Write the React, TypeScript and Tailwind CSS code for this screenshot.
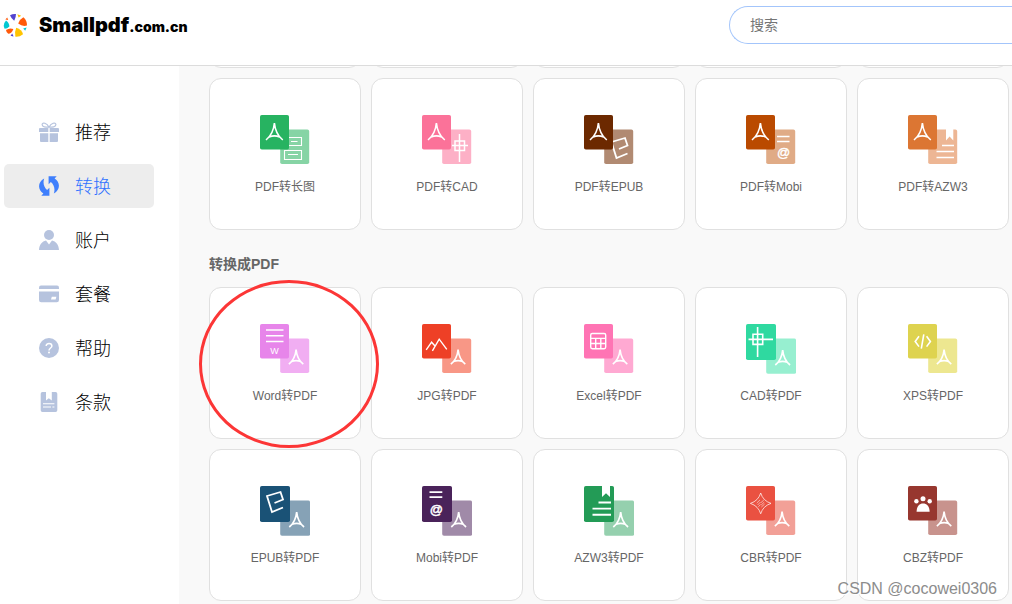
import type { ReactNode } from "react";

type Tool = {
  label: string;
  front: string;
  back: string;
  large?: boolean;
  circled?: boolean;
  frontGlyph: ReactNode;
  backGlyph: ReactNode;
};

type NavItem = { label: string; icon: ReactNode; active?: boolean };

const pdfPath =
  "M14.4 8C13.9 13.5 11.2 20.8 6 25M14.4 8C14.9 13.5 17.6 20.8 22.8 25M9.2 21.9Q14.4 19.8 19.6 21.9";

const pdfFront = <path d={pdfPath} strokeWidth="1.6" />;
const pdfBack = (
  <g transform="translate(23.7 18.7) scale(.86)">
    <path d={pdfPath} strokeWidth="1.9" />
  </g>
);
const pdfBackLarge = (
  <g transform="translate(24 19) scale(.88)">
    <path d={pdfPath} strokeWidth="1.9" />
  </g>
);

const epubGlyph = <path d="M14.5 17L23 13.5L20.5 6L7 10L12 26L23 21.5" strokeWidth="1.8" />;

const fromPdf: Tool[] = [
  {
    label: "PDF转长图",
    front: "#27b361",
    back: "#86d4a5",
    frontGlyph: pdfFront,
    backGlyph: (
      <path
        d="M24.5 22.5H41.5V30.5H24.5ZM31 26.5H37.5M24.5 35.5H41.5V44.5H24.5ZM28 39.5H38"
        strokeWidth="1.1"
      />
    ),
  },
  {
    label: "PDF转CAD",
    front: "#fb7299",
    back: "#fdb0c6",
    frontGlyph: pdfFront,
    backGlyph: <path d="M37.5 19V47M30 30.5H46M33 26H42.5V35.5H33Z" strokeWidth="1.5" />,
  },
  {
    label: "PDF转EPUB",
    front: "#6c2900",
    back: "#b18a72",
    frontGlyph: pdfFront,
    backGlyph: <g transform="translate(20.5 17)">{epubGlyph}</g>,
  },
  {
    label: "PDF转Mobi",
    front: "#ba4a00",
    back: "#e0ab86",
    frontGlyph: pdfFront,
    backGlyph: (
      <>
        <path d="M31 21.5H43.5M31 26.5H43.5" strokeWidth="1.5" />
        <text x="37.7" y="42" fontSize="13" textAnchor="middle" fill="#fff" strokeWidth=".4">
          @
        </text>
      </>
    ),
  },
  {
    label: "PDF转AZW3",
    front: "#dc7633",
    back: "#edb694",
    frontGlyph: pdfFront,
    backGlyph: (
      <>
        <path d="M38 14H45.3V25.5L41.6 21.5L38 25.5Z" fill="#fff" stroke="none" />
        <path d="M34 30.5H46M28.5 36.5H46M28.5 42.5H46" strokeWidth="1.6" />
      </>
    ),
  },
];

const toPdf: Tool[] = [
  {
    label: "Word转PDF",
    front: "#e785ea",
    back: "#f1aef2",
    circled: true,
    frontGlyph: (
      <>
        <path d="M6 6H23.5M6 11.7H23.5M6 17.4H23.5" strokeWidth="1.5" />
        <text x="14.4" y="29.6" fontSize="9" textAnchor="middle" fill="#fff" stroke="none">
          W
        </text>
      </>
    ),
    backGlyph: pdfBack,
  },
  {
    label: "JPG转PDF",
    front: "#ee4026",
    back: "#f89786",
    frontGlyph: (
      <path d="M4.2 25.8L9.6 18.2L12.8 21.8M10.4 26.8L17.2 15.2L24.8 25.3" strokeWidth="1.4" />
    ),
    backGlyph: pdfBack,
  },
  {
    label: "Excel转PDF",
    front: "#ff74b4",
    back: "#ffa9d2",
    frontGlyph: (
      <>
        <rect x="6.7" y="9.5" width="15" height="15.2" rx="1.6" strokeWidth="1.4" />
        <path d="M6.7 14.4H21.7M6.7 19.5H21.7M11.7 14.4V24.7M16.8 14.4V24.7" strokeWidth="1.4" />
      </>
    ),
    backGlyph: pdfBack,
  },
  {
    label: "CAD转PDF",
    front: "#2fd9a0",
    back: "#97efd0",
    large: true,
    frontGlyph: <path d="M11.6 3V33M2.5 15.4H27M7 10.2H16.7V20.4H7Z" strokeWidth="1.6" />,
    backGlyph: pdfBackLarge,
  },
  {
    label: "XPS转PDF",
    front: "#ded34f",
    back: "#ede790",
    frontGlyph: (
      <path
        d="M11 12.3L7.2 17.4L11 22.6M18.6 12.3L22.4 17.4L18.6 22.6M15.8 10.3L13.3 24.6"
        strokeWidth="1.6"
      />
    ),
    backGlyph: pdfBack,
  },
  {
    label: "EPUB转PDF",
    front: "#1a5276",
    back: "#86a2b6",
    large: true,
    frontGlyph: epubGlyph,
    backGlyph: pdfBackLarge,
  },
  {
    label: "Mobi转PDF",
    front: "#4a235a",
    back: "#a08aa8",
    large: true,
    frontGlyph: (
      <>
        <path d="M7.5 6.2H20.3M7.5 11.2H20.3" strokeWidth="1.7" />
        <text x="14.3" y="28" fontSize="13" textAnchor="middle" fill="#fff" strokeWidth=".5">
          @
        </text>
      </>
    ),
    backGlyph: pdfBackLarge,
  },
  {
    label: "AZW3转PDF",
    front: "#239b56",
    back: "#95d0ae",
    large: true,
    frontGlyph: (
      <>
        <path d="M18 0H26V11L22 7.2L18 11Z" fill="#fff" stroke="none" />
        <path d="M14.5 16.5H27M8.5 22.6H27M8.5 28.7H27" strokeWidth="1.9" />
      </>
    ),
    backGlyph: pdfBackLarge,
  },
  {
    label: "CBR转PDF",
    front: "#ea5141",
    back: "#f2a097",
    frontGlyph: (
      <g strokeOpacity=".8">
        <path
          d="M14.7 7Q17 14.8 25 17.4Q17 20 14.7 27.8Q12.4 20 4.4 17.4Q12.4 14.8 14.7 7Z"
          strokeWidth=".9"
        />
        <path
          d="M10.8 17L14 13.9M11.6 19L14.6 16M15 16.6L17.8 14M12.4 20.6L14.6 18.6M15.2 19L18.2 16.2M15.4 21L18.6 18"
          strokeWidth=".7"
        />
      </g>
    ),
    backGlyph: pdfBack,
  },
  {
    label: "CBZ转PDF",
    front: "#97372f",
    back: "#c8938d",
    frontGlyph: (
      <g fill="#fff" stroke="none">
        <circle cx="8.4" cy="15.3" r="2.2" />
        <circle cx="15" cy="12.8" r="2.5" />
        <circle cx="21.7" cy="15.3" r="2.2" />
        <path d="M8.6 25.8C8.6 20.8 11 17.6 15.1 17.6S21.6 20.8 21.6 25.8Z" />
      </g>
    ),
    backGlyph: pdfBack,
  },
];

const navItems: NavItem[] = [
  {
    label: "推荐",
    icon: (
      <>
        <path
          d="M10 5.2C8 1 3.3-.3 3.1 2.6C3 5 6.6 5.2 10 5.2C13.4 5.2 17 5 16.9 2.6C16.7-.3 12 1 10 5.2Z"
          fill="none"
          stroke="currentColor"
          strokeWidth="1.2"
        />
        <path d="M1 6H9.3V10H0V7Q0 6 1 6ZM10.7 6H19Q20 6 20 7V10H10.7ZM1 11.3H9.3V20H2Q1 20 1 19ZM10.7 11.3H19V19Q19 20 18 20H10.7Z" />
      </>
    ),
  },
  {
    label: "转换",
    active: true,
    icon: (
      <>
        <path d="M5.2 2.4C-1.4 6-1.6 13.7 4.4 17.5L2.3 19.8H10.4V11.8L8.1 14C5 11.4 3.6 7 5.2 2.4Z" />
        <path d="M14.8 17.6C21.4 14 21.6 6.3 15.6 2.5L17.7.2H9.6V8.2L11.9 6C15 8.6 16.4 13 14.8 17.6Z" />
      </>
    ),
  },
  {
    label: "账户",
    icon: (
      <>
        <circle cx="10" cy="5" r="5" />
        <path d="M0 20C.3 14.5 3.2 11.3 7 10.5L10 14.5L13 10.5C16.8 11.3 19.7 14.5 20 20Z" />
      </>
    ),
  },
  {
    label: "套餐",
    icon: (
      <>
        <path d="M0 5V3.4Q0 1.4 2 1.4H18Q20 1.4 20 3.4V5Z" />
        <path
          fillRule="evenodd"
          d="M0 7.6H20V16Q20 18.2 17.8 18.2H2.2Q0 18.2 0 16ZM12.8 12.8L12 15.6H16.6L17.4 12.8Z"
        />
      </>
    ),
  },
  {
    label: "帮助",
    icon: (
      <>
        <circle cx="10" cy="10" r="10" />
        <path
          d="M7.2 8C7.2 4.5 12.9 4.6 12.9 8C12.9 10 10 10 10 12.4"
          fill="none"
          stroke="#fff"
          strokeWidth="1.5"
        />
        <circle cx="10" cy="14.6" r="1" fill="#fff" />
      </>
    ),
  },
  {
    label: "条款",
    icon: (
      <path
        fillRule="evenodd"
        d="M3.4 0H7V8.6L9.8 6.2L12.8 8.6V0H16.6Q18.3 0 18.3 1.7V18.3Q18.3 20 16.6 20H3.4Q1.7 20 1.7 18.3V1.7Q1.7 0 3.4 0ZM4 11.2V12.2H15.4V11.2ZM4 14.4V15.4H12V14.4ZM13.4 14.4V15.4H15.4V14.4Z"
      />
    ),
  },
];

function ToolIcon({ tool }: { tool: Tool }) {
  const width = tool.large ? 30 : 29;
  return (
    <svg
      viewBox="0 0 50 50"
      className="size-[50px]"
      fill="none"
      stroke="#fff"
      fontFamily="Liberation Sans, sans-serif"
      aria-hidden="true"
    >
      <rect
        x="20.2"
        y="14.6"
        width={width}
        height={tool.large ? 35.2 : 34.4}
        rx="1.8"
        fill={tool.back}
        stroke="none"
      />
      {tool.backGlyph}
      <rect width={width} height={tool.large ? 36 : 34.5} rx="1.8" fill={tool.front} stroke="none" />
      {tool.frontGlyph}
    </svg>
  );
}

function ToolCard({ tool }: { tool: Tool }) {
  return (
    <a
      href="#"
      className="relative flex h-[152px] flex-col items-center gap-3 rounded-xl border border-[#e0e0e0] bg-white pt-9 text-xs leading-5 text-[#666]"
    >
      <ToolIcon tool={tool} />
      {tool.label}
      {tool.circled && (
        <span className="pointer-events-none absolute -top-2 -left-[11px] z-10 h-[168px] w-[180px] rounded-[50%] border-3 border-[#fc3636]" />
      )}
    </a>
  );
}

function ToolGrid({ tools }: { tools: Tool[] }) {
  return (
    <div className="grid grid-cols-[repeat(auto-fill,152px)] gap-[10px]">
      {tools.map((tool) => (
        <ToolCard key={tool.label} tool={tool} />
      ))}
    </div>
  );
}

function Logo() {
  return (
    <a href="#" className="flex items-center gap-[11px] text-black">
      <svg viewBox="0 0 25 25" className="size-[25px]" aria-hidden="true">
        <path d="M7 2.2Q9.8.6 13 1Q13 4.4 11.2 7.8Q8.4 5.8 7 2.2Z" fill="#5344cf" />
        <path d="M15.2 10.6Q16.6 6.2 20.4 4.3Q24.2 7.8 24 12.6Q19.4 14 15.2 10.6Z" fill="#ff5a0a" />
        <path d="M13.2 14.8Q19 16.6 20 21.2Q16.6 24.2 12.4 23.8Q11.4 18.6 13.2 14.8Z" fill="#ffc400" />
        <path d="M10.4 16Q8.8 20.6 5.2 20.8Q3.2 19 3 17Q6.6 14.4 10.4 16Z" fill="#ff5a0a" />
        <path d="M3 7.4Q6.4 9.8 6.4 13.6Q4.4 15.8 1.6 15.8Q-.6 11.4 3 7.4Z" fill="#00c8d2" />
        <path d="M14.4 1.2L18.2 2.7L15.6 4.6Z" fill="#ffc400" />
        <path d="M20.2 15.4L23.6 14.6L22.2 17.8Z" fill="#00c8d2" />
        <path d="M9.2 20.6L10.6 23.6L7.6 22.7Z" fill="#5344cf" />
        <path d="M2.4 6.4L4.2 4.6L5.2 7Z" fill="#ff5a0a" />
      </svg>
      <span className="font-['Inter',sans-serif] text-xl leading-6 font-black">
        Smallpdf<span className="text-sm">.com.cn</span>
      </span>
    </a>
  );
}

export default function App() {
  return (
    <div className="relative flex min-h-screen flex-col overflow-hidden bg-white font-['Liberation_Sans','Noto_Sans_CJK_SC',sans-serif]">
      <header className="flex h-[66px] items-start justify-between border-b border-[#dcdcdc] pt-[6px] pl-[3px]">
        <div className="flex h-[38px] items-center">
          <Logo />
        </div>
        <input
          type="search"
          aria-label="搜索"
          placeholder="搜索"
          className="h-[38px] w-[283px] rounded-l-full border border-r-0 border-[#a3c5fb] bg-white pl-5 text-sm text-[#333] outline-none placeholder:text-[#757575]"
        />
      </header>

      <div className="flex flex-1">
        <nav className="flex w-[179px] shrink-0 flex-col gap-[10px] pt-11 pl-1">
          {navItems.map((item) => (
            <a
              key={item.label}
              href="#"
              aria-current={item.active ? "page" : undefined}
              className={
                item.active
                  ? "flex h-11 w-[150px] items-center gap-4 rounded-[5px] bg-[#ededed] pl-[35px] text-lg font-light text-[#3072ff]"
                  : "flex h-11 w-[150px] items-center gap-4 rounded-[5px] pl-[35px] text-lg font-light text-black"
              }
            >
              <svg
                viewBox="0 0 20 20"
                className={item.active ? "size-5 text-[#3f7ffc]" : "size-5 text-[#b6c3de]"}
                fill="currentColor"
                aria-hidden="true"
              >
                {item.icon}
              </svg>
              <span className="pt-0.5">{item.label}</span>
            </a>
          ))}
        </nav>

        <main className="min-w-0 flex-1 overflow-hidden bg-[#f9f9f9] pl-[30px]">
          <div className="-mt-5 mb-[10px] grid grid-cols-[repeat(auto-fill,152px)] gap-[10px]">
            {fromPdf.map((tool) => (
              <div key={tool.label} className="h-[22px] rounded-b-xl border border-[#e0e0e0] bg-white" />
            ))}
          </div>
          <ToolGrid tools={fromPdf} />
          <h2 className="pt-6 pb-[13px] text-sm leading-5 font-bold text-[#666]">转换成PDF</h2>
          <ToolGrid tools={toPdf} />
        </main>
      </div>

      <p className="absolute right-[15px] bottom-[3px] z-20 text-base leading-6 text-[#8c8c8c] [text-shadow:1px_1px_0_#fff]">
        CSDN @cocowei0306
      </p>
    </div>
  );
}
